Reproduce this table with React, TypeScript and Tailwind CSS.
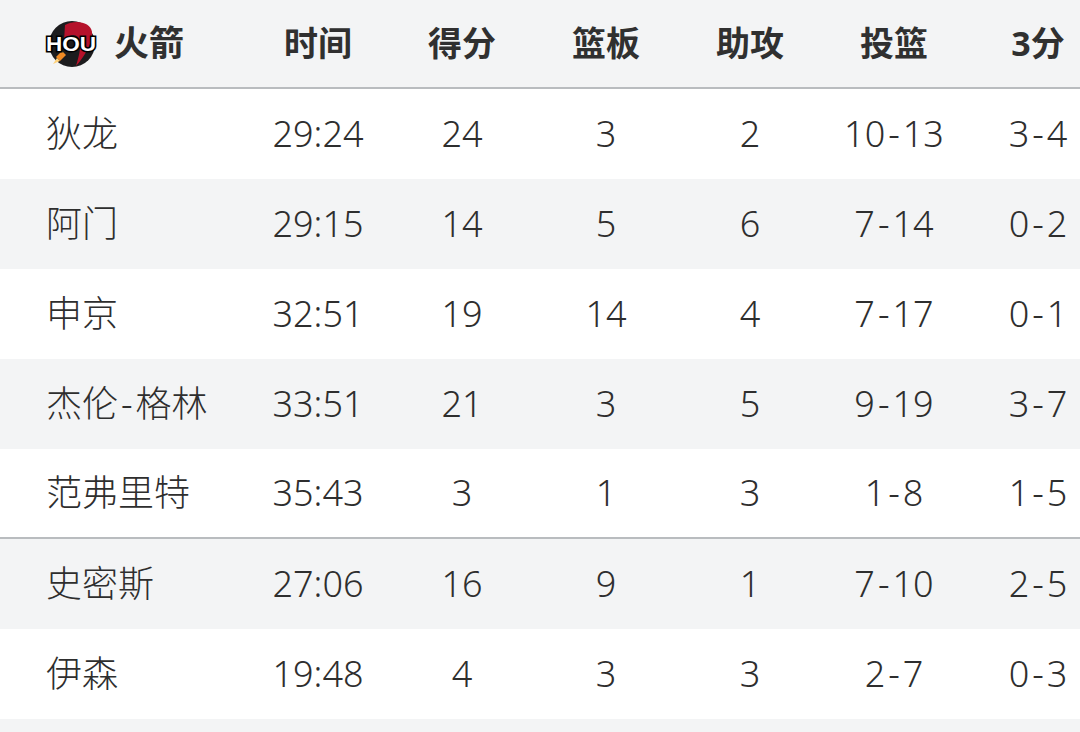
import React from "react";

type Row = {
  name: string;
  time: string;
  pts: string;
  reb: string;
  ast: string;
  fg: string;
  tp: string;
};

const rows: Row[] = [
  { name: "狄龙", time: "29:24", pts: "24", reb: "3", ast: "2", fg: "10-13", tp: "3-4" },
  { name: "阿门", time: "29:15", pts: "14", reb: "5", ast: "6", fg: "7-14", tp: "0-2" },
  { name: "申京", time: "32:51", pts: "19", reb: "14", ast: "4", fg: "7-17", tp: "0-1" },
  { name: "杰伦-格林", time: "33:51", pts: "21", reb: "3", ast: "5", fg: "9-19", tp: "3-7" },
  { name: "范弗里特", time: "35:43", pts: "3", reb: "1", ast: "3", fg: "1-8", tp: "1-5" },
  { name: "史密斯", time: "27:06", pts: "16", reb: "9", ast: "1", fg: "7-10", tp: "2-5" },
  { name: "伊森", time: "19:48", pts: "4", reb: "3", ast: "3", fg: "2-7", tp: "0-3" },
];

const headers = ["时间", "得分", "篮板", "助攻", "投篮", "3分"];

// the app draws its dash with extra room on both sides
function Dashed({ text }: { text: string }) {
  const parts = text.split("-");
  return (
    <>
      {parts.map((p, i) => (
        <React.Fragment key={i}>
          {i > 0 && <span className="px-[3px]">-</span>}
          {p}
        </React.Fragment>
      ))}
    </>
  );
}

function HouLogo() {
  return (
    <svg width="54" height="54" viewBox="0 0 54 54" className="shrink-0">
      <circle cx="28" cy="27" r="23" fill="#1c1c1e" />
      <path
        d="M21 8 C31 2 47 5 48 15 C49 24 42 38 32 49 C36 36 38 26 34 20 C30 16 24 18 20 24 Z"
        fill="#b5122b"
      />
      <path d="M12 40 L18 34 L22 38 L16 44 Z" fill="#f08a24" />
      <path d="M9 47 L13 41 L16 44 Z" fill="#ffd27a" />
      <text
        x="27"
        y="34"
        textAnchor="middle"
        fontFamily="'Liberation Sans', Arial, sans-serif"
        fontWeight="900"
        fontSize="20"
        fill="#ffffff"
        stroke="#000000"
        strokeWidth="3"
        paintOrder="stroke"
        textLength="50"
        lengthAdjust="spacingAndGlyphs"
      >
        HOU
      </text>
    </svg>
  );
}

export default function App() {
  return (
    <div
      className="w-[1080px] h-[732px] overflow-hidden bg-white text-[#2e2e2e]"
      style={{ fontFamily: "'Noto Sans', 'Noto Sans CJK SC', sans-serif" }}
    >
      <div className="flex h-[89px] items-center border-b-2 border-[#b9bcbf] bg-[#f3f4f5] font-bold text-[#303030]">
        <div className="flex w-[246px] shrink-0 items-center gap-[16px] pl-[44px]">
          <HouLogo />
          <span className="text-[35px]">火箭</span>
        </div>
        {headers.map((h) => (
          <div key={h} className="w-[144px] shrink-0 text-center text-[34px]">
            {h}
          </div>
        ))}
      </div>
      {rows.map((r, i) => (
        <div
          key={r.name}
          className={`flex h-[90px] items-center text-[36px] font-light ${
            i % 2 === 1 ? "bg-[#f3f4f5]" : "bg-white"
          } ${i === 4 ? "border-b-2 border-[#b9bcbf]" : ""}`}
        >
          <div className="w-[246px] shrink-0 pl-[46px]">
            <Dashed text={r.name} />
          </div>
          {[r.time, r.pts, r.reb, r.ast, r.fg, r.tp].map((v, j) => (
            <div key={j} className="w-[144px] shrink-0 text-center">
              <Dashed text={v} />
            </div>
          ))}
        </div>
      ))}
      <div className="h-[90px] bg-[#f3f4f5]" />
    </div>
  );
}
